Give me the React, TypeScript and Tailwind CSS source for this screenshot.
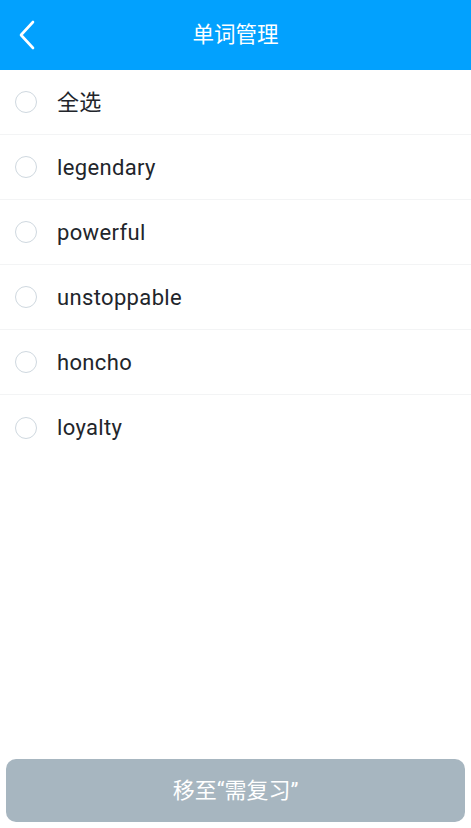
import React from "react";

const words = ["全选", "legendary", "powerful", "unstoppable", "honcho", "loyalty"];

export default function App() {
  return (
    <div
      className="w-[471px] h-[828px] bg-white flex flex-col"
      style={{ fontFamily: 'Roboto, "Noto Sans CJK SC", sans-serif' }}
    >
      <div className="h-[70px] bg-[#02a1fe] flex items-center relative shrink-0">
        <svg className="absolute left-[17px] top-[20px]" width="20" height="30" viewBox="0 0 20 30">
          <path d="M16 2 L4 15 L16 28" fill="none" stroke="#fff" strokeWidth="2.6" strokeLinecap="round" strokeLinejoin="round" />
        </svg>
        <div className="flex-1 text-center text-white text-[21.5px] leading-none">单词管理</div>
      </div>
      <div className="flex flex-col">
        {words.map((w, i) => (
          <div
            key={w}
            className={`h-[65px] flex items-center ${i < words.length - 1 ? "border-b border-[#f3f4f5]" : ""}`}
          >
            <div className="ml-[15px] w-[22px] h-[22px] rounded-full border-[1.5px] border-[#cfd8df]" />
            <span className="ml-[20px] text-[22px] tracking-[0.35px] text-[#22252b]">{w}</span>
          </div>
        ))}
      </div>
      <div className="flex-1" />
      <div className="px-[6px] pb-[6px]">
        <div className="h-[63px] rounded-[10px] bg-[#a7b6c0] flex items-center justify-center text-white text-[22px]">
          移至“需复习”
        </div>
      </div>
    </div>
  );
}
